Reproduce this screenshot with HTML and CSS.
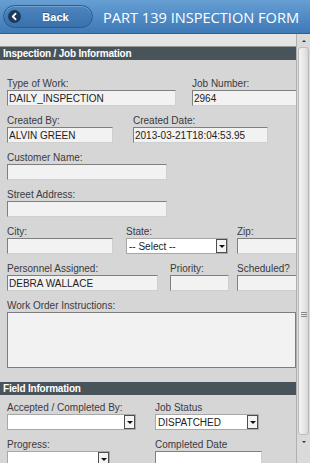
FILE: index.html
```html
<!DOCTYPE html>
<html>
<head>
    <meta charset="UTF-8">
    <link rel="stylesheet" href="styles.css">
</head>
<body>
    <div class="app">
        <div class="topbar">
            <a class="back-btn" href="#">
                <span class="back-icon">
                    <svg width="13" height="13" viewBox="0 0 13 13">
                        <circle cx="6.5" cy="6.5" r="6.5" fill="#1c3a5c"/>
                        <path d="M7.6 3.6 L4.8 6.5 L7.6 9.4" fill="none" stroke="#fff" stroke-width="1.8" stroke-linecap="round" stroke-linejoin="round"/>
                    </svg>
                </span>
                <span class="back-text">Back</span>
            </a>
            <h1 class="page-title">PART 139 INSPECTION FORM</h1>
        </div>

        <div class="main">
            <div class="form-scroll">
                <div class="top-strip"></div>

                <div class="section-bar">Inspection / Job Information</div>
                <div class="section-body">
                    <div class="row">
                        <div class="field fld-type">
                            <label>Type of Work:</label>
                            <input class="text-input" type="text" value="DAILY_INSPECTION">
                        </div>
                        <div class="field fld-jobnum">
                            <label>Job Number:</label>
                            <input class="text-input" type="text" value="2964">
                        </div>
                    </div>
                    <div class="row">
                        <div class="field fld-createdby">
                            <label>Created By:</label>
                            <input class="text-input" type="text" value="ALVIN GREEN">
                        </div>
                        <div class="field fld-createddate">
                            <label>Created Date:</label>
                            <input class="text-input" type="text" value="2013-03-21T18:04:53.95">
                        </div>
                    </div>
                    <div class="row">
                        <div class="field fld-long">
                            <label>Customer Name:</label>
                            <input class="text-input" type="text" value="">
                        </div>
                    </div>
                    <div class="row">
                        <div class="field fld-long">
                            <label>Street Address:</label>
                            <input class="text-input" type="text" value="">
                        </div>
                    </div>
                    <div class="row">
                        <div class="field fld-city">
                            <label>City:</label>
                            <input class="text-input" type="text" value="">
                        </div>
                        <div class="field fld-state">
                            <label>State:</label>
                            <div class="select">
                                <span class="select-value">-- Select --</span>
                                <span class="select-btn"></span>
                            </div>
                        </div>
                        <div class="field fld-zip">
                            <label>Zip:</label>
                            <input class="text-input" type="text" value="">
                        </div>
                    </div>
                    <div class="row">
                        <div class="field fld-personnel">
                            <label>Personnel Assigned:</label>
                            <input class="text-input" type="text" value="DEBRA WALLACE">
                        </div>
                        <div class="field fld-priority">
                            <label>Priority:</label>
                            <input class="text-input" type="text" value="">
                        </div>
                        <div class="field fld-scheduled">
                            <label>Scheduled?</label>
                            <input class="text-input" type="text" value="">
                        </div>
                    </div>
                    <div class="row">
                        <div class="field fld-notes">
                            <label>Work Order Instructions:</label>
                            <textarea class="text-area"></textarea>
                        </div>
                    </div>
                </div>

                <div class="section-bar">Field Information</div>
                <div class="section-body section-body-tight">
                    <div class="row">
                        <div class="field fld-accepted">
                            <label>Accepted / Completed By:</label>
                            <div class="select">
                                <span class="select-value"></span>
                                <span class="select-btn"></span>
                            </div>
                        </div>
                        <div class="field fld-status">
                            <label>Job Status</label>
                            <div class="select">
                                <span class="select-value">DISPATCHED</span>
                                <span class="select-btn"></span>
                            </div>
                        </div>
                    </div>
                    <div class="row">
                        <div class="field fld-progress">
                            <label>Progress:</label>
                            <div class="select">
                                <span class="select-value"></span>
                                <span class="select-btn"></span>
                            </div>
                        </div>
                        <div class="field fld-completed">
                            <label>Completed Date</label>
                            <input class="text-input input-white" type="text" value="">
                        </div>
                    </div>
                </div>
            </div>

            <div class="scrollbar">
                <div class="scroll-arrow scroll-up"></div>
                <div class="scroll-thumb">
                    <div class="scroll-grip"></div>
                </div>
                <div class="scroll-arrow scroll-down"></div>
            </div>
        </div>
    </div>
</body>
</html>
```

FILE: styles.css
```css
html, body {
    margin: 0;
    padding: 0;
}
body {
    font-family: 'Liberation Sans', Arial, sans-serif;
    background: #d6d6d6;
}
.app {
    width: 310px;
    height: 463px;
    display: flex;
    flex-direction: column;
    overflow: hidden;
}

/* header */
.topbar {
    height: 33px;
    flex: none;
    display: flex;
    align-items: center;
    background: linear-gradient(180deg, #679fd3 0%, #4f8ac5 55%, #3f79b6 100%);
    border-bottom: 1px solid #2f5f92;
}
.back-btn {
    margin-left: 3px;
    width: 90px;
    height: 23px;
    box-sizing: border-box;
    display: flex;
    align-items: center;
    border-radius: 12px;
    border: 1px solid #2a5b8e;
    background: linear-gradient(180deg, #4c85c0 0%, #3a71ac 100%);
    box-shadow: inset 0 1px 0 rgba(255,255,255,0.25);
    text-decoration: none;
}
.back-icon {
    display: flex;
    margin-left: 4px;
}
.back-text {
    flex: 1;
    text-align: center;
    padding-right: 2px;
    color: #fff;
    font-size: 11px;
    font-weight: bold;
    text-shadow: 0 -1px 0 rgba(0,0,0,0.3);
}
.page-title {
    margin: 0 0 0 10px;
    font-family: 'Open Sans', sans-serif;
    font-size: 14.6px;
    font-weight: normal;
    color: #fff;
    white-space: nowrap;
}

/* body */
.main {
    flex: 1;
    display: flex;
    min-height: 0;
}
.form-scroll {
    width: 296px;
    flex: none;
    overflow: hidden;
}
.top-strip {
    height: 12px;
    background: #e4e4e4;
    border-bottom: 1px solid #9a9a9a;
}
.section-bar {
    height: 13px;
    line-height: 13px;
    padding-left: 3px;
    background: #49535a;
    color: #fff;
    font-size: 10px;
    font-weight: bold;
    letter-spacing: -0.2px;
    white-space: nowrap;
}
.section-body {
    padding: 18px 0 5px 7px;
}
.section-body-tight {
    padding-top: 7px;
}
.row {
    display: flex;
    margin-bottom: 9px;
}
.field {
    flex: none;
    display: flex;
    flex-direction: column;
}
.field label {
    height: 12px;
    line-height: 12px;
    font-size: 10px;
    color: #3a3a40;
    white-space: nowrap;
}
.text-input {
    width: 100%;
    height: 16px;
    box-sizing: border-box;
    margin: 0;
    padding: 0 1px;
    font-family: 'Liberation Sans', Arial, sans-serif;
    font-size: 10px;
    color: #222;
    background: #f2f2f2;
    border: 1px solid;
    border-color: #7f7f7f #cfcfcf #cfcfcf #7f7f7f;
    border-radius: 0;
    outline: none;
}
.input-white {
    background: #fff;
}
.text-area {
    width: 100%;
    height: 56px;
    box-sizing: border-box;
    margin: 0;
    background: #f2f2f2;
    border: 1px solid #7d7d7d;
    border-radius: 0;
    resize: none;
    outline: none;
}
.select {
    height: 16px;
    box-sizing: border-box;
    display: flex;
    align-items: center;
    background: #fff;
    border: 1px solid #a8a8a8;
}
.select-value {
    flex: 1;
    padding-left: 2px;
    font-size: 10px;
    color: #222;
    white-space: nowrap;
    overflow: hidden;
}
.select-btn {
    width: 11px;
    height: 14px;
    box-sizing: border-box;
    flex: none;
    display: flex;
    align-items: center;
    justify-content: center;
    background: #f4f4f4;
    border: 1px solid #4e4e4e;
}
.select-btn::after {
    content: '';
    border-left: 3px solid transparent;
    border-right: 3px solid transparent;
    border-top: 3px solid #111;
    margin-top: 1px;
}

/* field widths */
.fld-type { width: 169px; }
.fld-jobnum { width: 120px; margin-left: 16px; }
.fld-createdby { width: 106px; }
.fld-createddate { width: 135px; margin-left: 20px; }
.fld-long { width: 160px; }
.fld-city { width: 106px; }
.fld-state { width: 102px; margin-left: 13px; }
.fld-zip { width: 70px; margin-left: 9px; }
.fld-personnel { width: 151px; }
.fld-priority { width: 59px; margin-left: 12px; }
.fld-scheduled { width: 70px; margin-left: 8px; }
.fld-notes { width: 289px; }
.fld-accepted { width: 129px; }
.fld-status { width: 104px; margin-left: 19px; }
.fld-progress { width: 103px; }
.fld-completed { width: 107px; margin-left: 45px; }

/* scrollbar */
.scrollbar {
    width: 14px;
    flex: none;
    box-sizing: border-box;
    display: flex;
    flex-direction: column;
    background: #dadada;
    border-left: 1px solid #b0b0b0;
}
.scroll-arrow {
    height: 13px;
    flex: none;
    display: flex;
    align-items: center;
    justify-content: center;
}
.scroll-up::after {
    content: '';
    border-left: 2px solid transparent;
    border-right: 2px solid transparent;
    border-bottom: 2px solid #333;
}
.scroll-down::after {
    content: '';
    border-left: 2px solid transparent;
    border-right: 2px solid transparent;
    border-top: 2px solid #333;
}
.scroll-thumb {
    flex: none;
    height: 388px;
    margin: 0 1px 0 1px;
    box-sizing: border-box;
    border: 1px solid #bcbcbc;
    border-radius: 3px;
    background: linear-gradient(90deg, #f3f3f3 0%, #e6e6e6 60%, #d4d4d4 100%);
    padding-top: 264px;
}
.scroll-grip {
    width: 6px;
    height: 6px;
    margin: 0 auto;
    background: repeating-linear-gradient(180deg, #8a8a8a 0 1px, transparent 1px 2px);
}
```
